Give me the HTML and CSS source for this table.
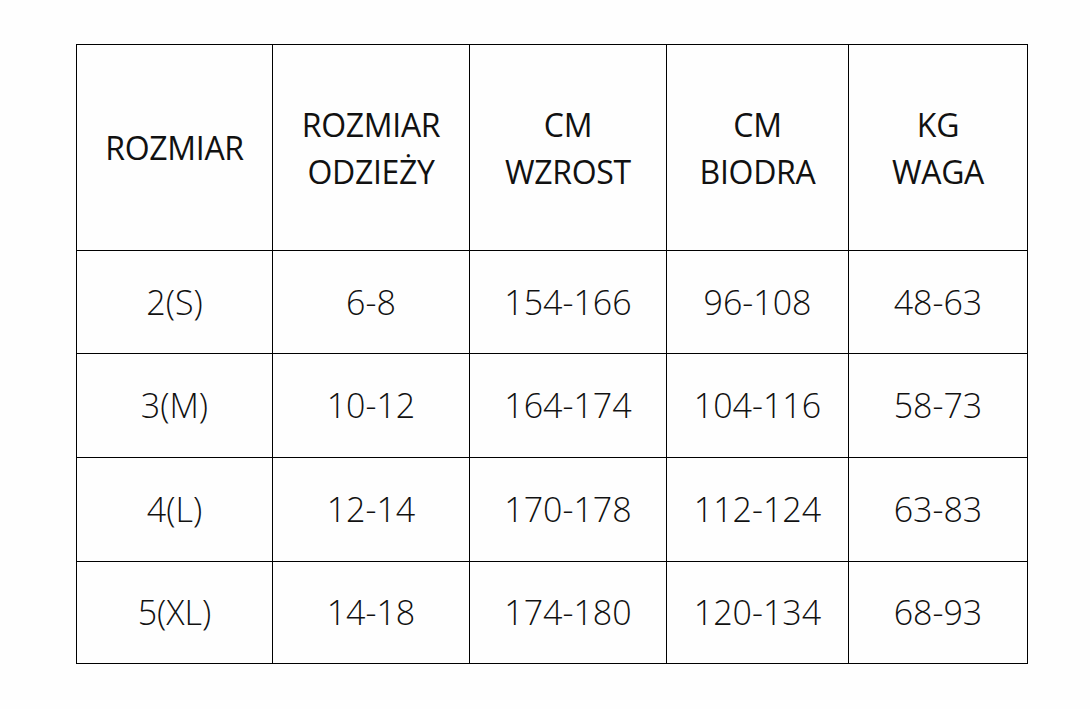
FILE: index.html
```html
<!DOCTYPE html>
<html lang="pl">
<head>
<meta charset="utf-8">
<title>Tabela rozmiarów</title>
<link rel="stylesheet" href="styles.css">
</head>
<body>
<table class="sizes">
  <colgroup>
    <col class="c1"><col class="c2"><col class="c3"><col class="c4"><col class="c5">
  </colgroup>
  <tr class="head">
    <td>ROZMIAR</td>
    <td>ROZMIAR<br>ODZIEŻY</td>
    <td>CM<br>WZROST</td>
    <td>CM<br>BIODRA</td>
    <td>KG<br>WAGA</td>
  </tr>
  <tr class="r1"><td>2(S)</td><td>6-8</td><td>154-166</td><td>96-108</td><td>48-63</td></tr>
  <tr class="r2"><td>3(M)</td><td>10-12</td><td>164-174</td><td>104-116</td><td>58-73</td></tr>
  <tr class="r3"><td>4(L)</td><td>12-14</td><td>170-178</td><td>112-124</td><td>63-83</td></tr>
  <tr class="r4"><td>5(XL)</td><td>14-18</td><td>174-180</td><td>120-134</td><td>68-93</td></tr>
</table>
</body>
</html>
```
FILE: styles.css
```css
html, body {
  margin: 0;
  background: #fefefe;
}
body {
  padding: 44px 0 0 76px;
  font-family: "Open Sans", "Noto Sans", sans-serif;
  font-weight: 300;
  color: #111;
}
.sizes {
  border-collapse: collapse;
  table-layout: fixed;
  width: 951px;
}
.c1 { width: 196px; }
.c2 { width: 197px; }
.c3 { width: 197px; }
.c4 { width: 182px; }
.c5 { width: 179px; }
.sizes td {
  border: 1px solid #000;
  text-align: center;
  vertical-align: middle;
  padding: 0;
  font-size: 34px;
  line-height: 47px;
}
.head td {
  height: 205px;
  font-size: 32px;
  font-weight: 400;
  letter-spacing: -0.3px;
}
.r1 td { height: 102px; }
.r2 td { height: 103px; }
.r3 td { height: 103px; }
.r4 td { height: 101px; }
```
